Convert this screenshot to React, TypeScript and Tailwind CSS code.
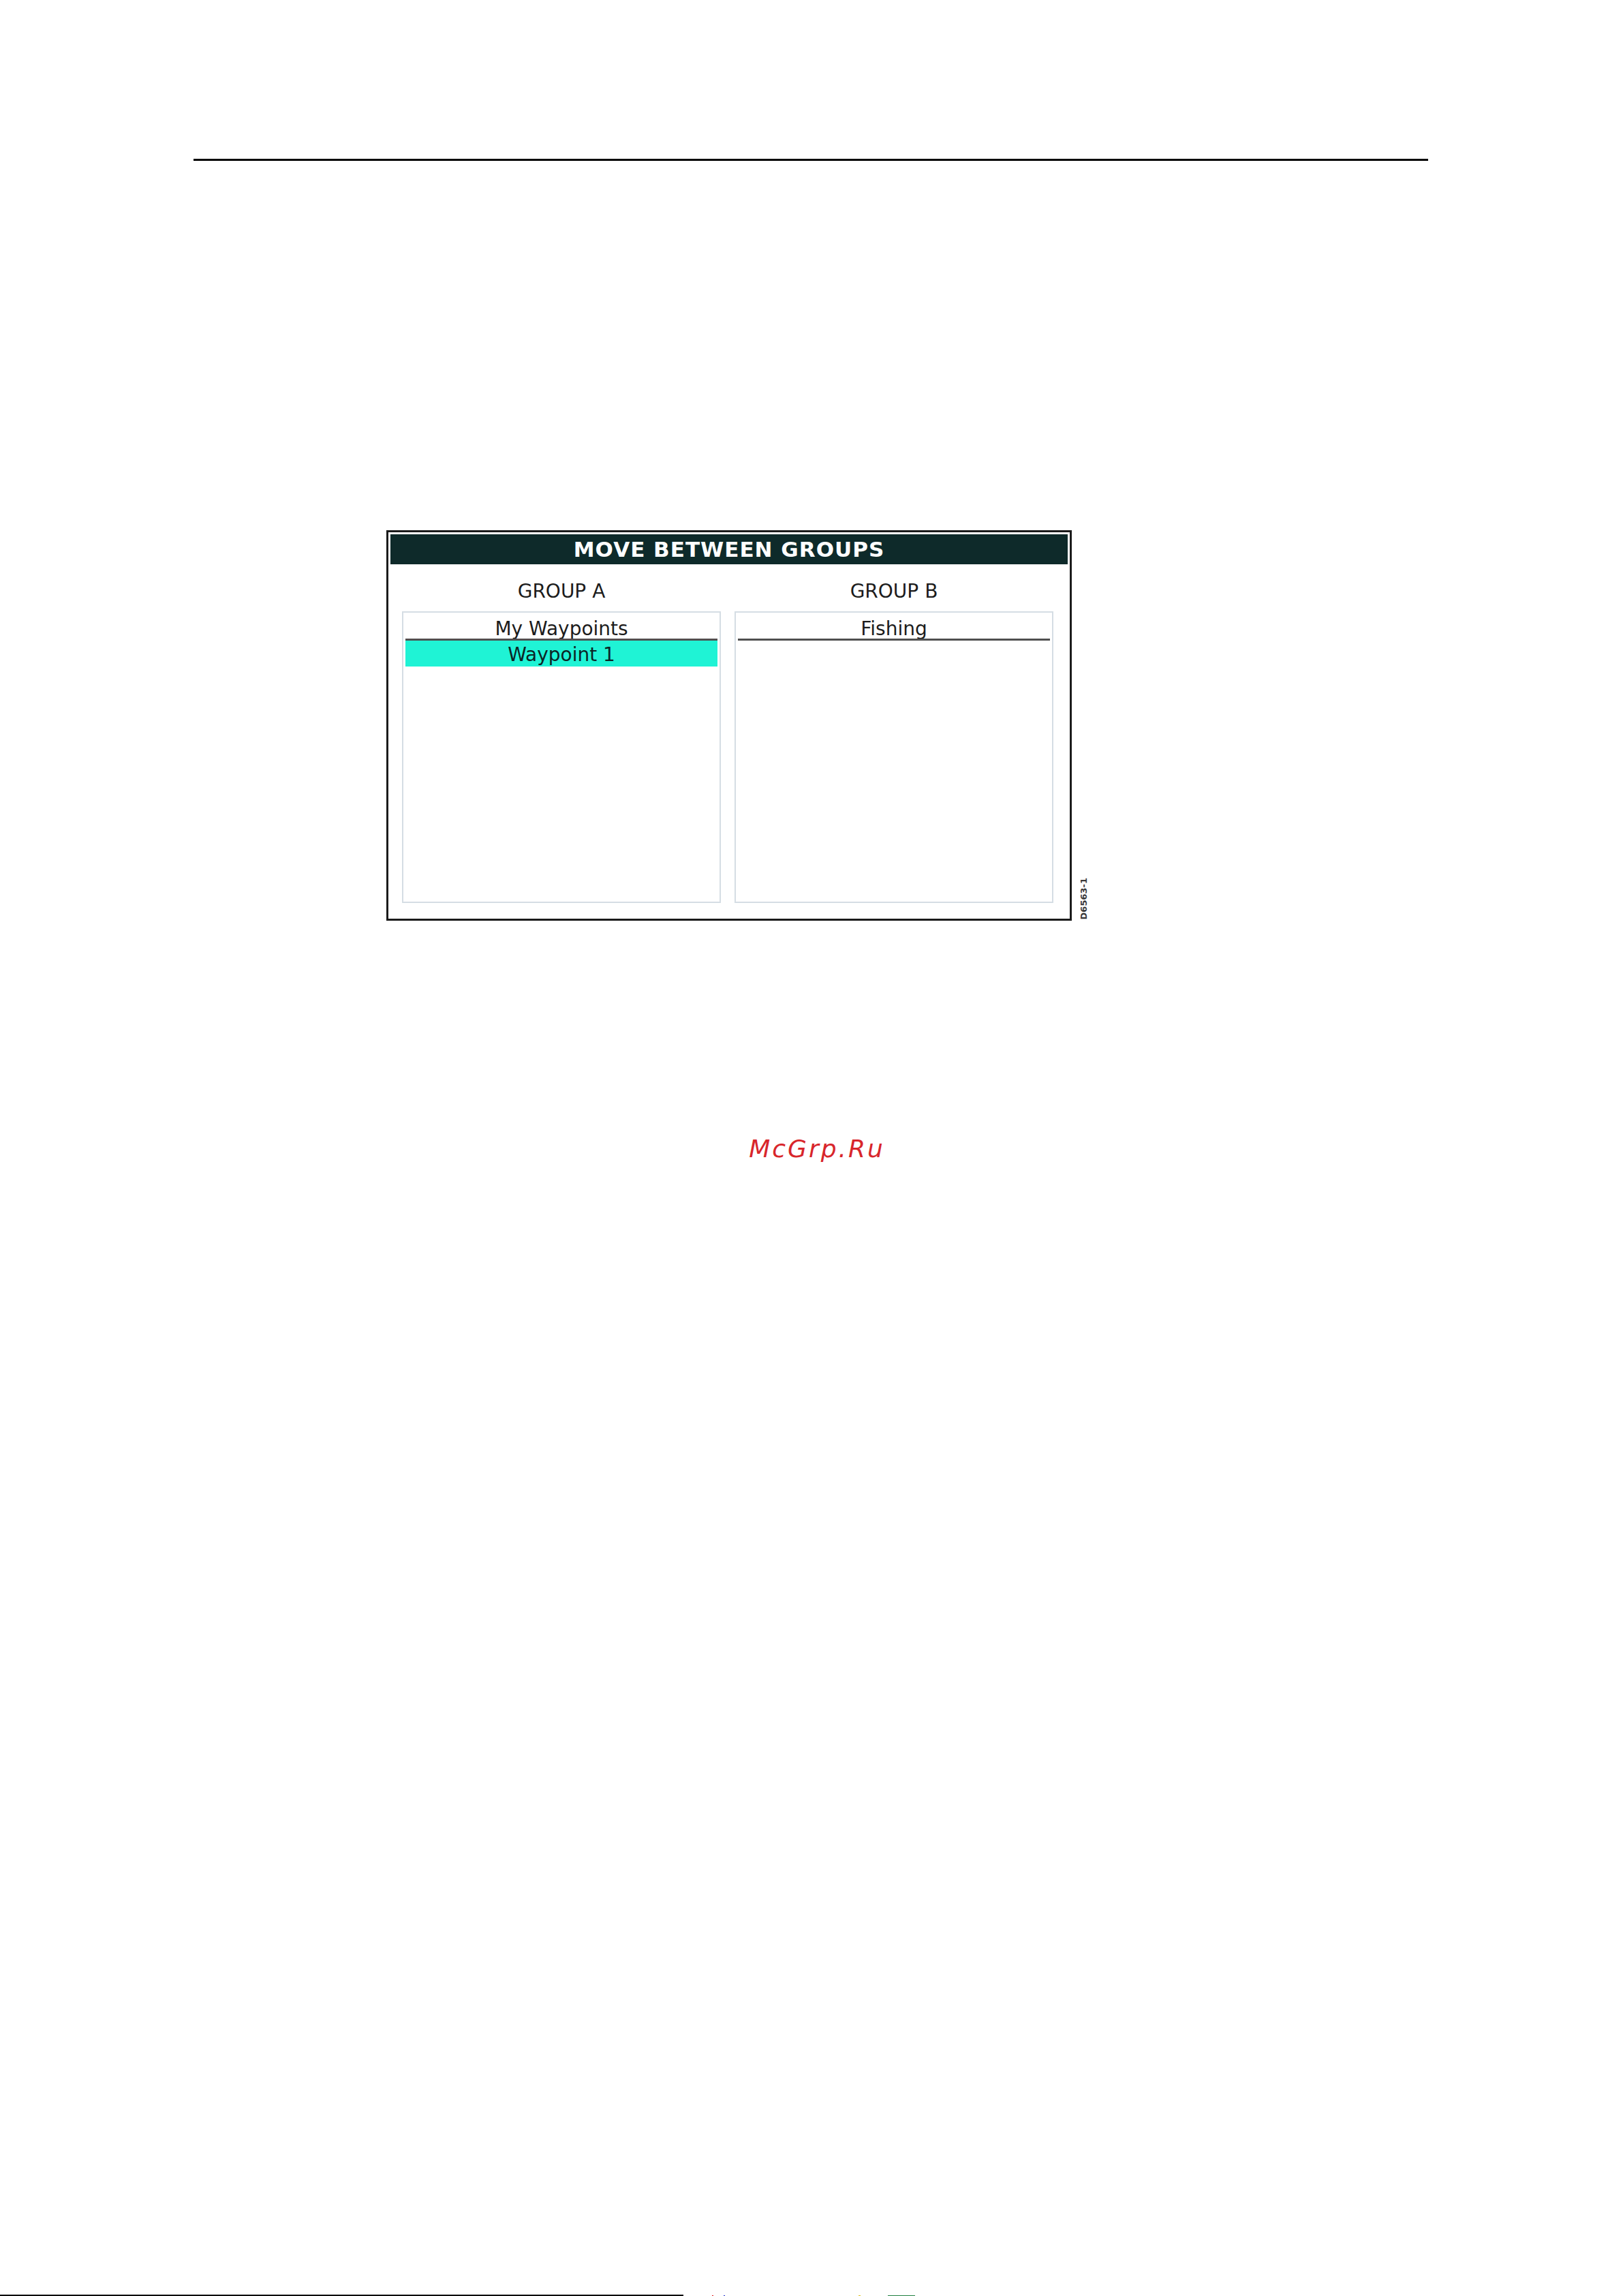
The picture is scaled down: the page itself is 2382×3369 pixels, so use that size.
const ui = { fontFamily: '"DejaVu Sans", Verdana, sans-serif' };

function ListBox({ title, items }: { title: string; items: string[] }) {
  return (
    <div className="flex h-[428px] flex-col border-2 border-[#d5dde4] px-[3px]">
      <div className="flex h-[38px] items-end justify-center">
        <span className="text-[28px] leading-[28px] text-[#1c1c1c]">{title}</span>
      </div>
      <div className="h-[3px] bg-[#505050]" />
      {items.map((it) => (
        <div
          key={it}
          className="h-[38px] bg-[#1ff3d5] pt-[3px] text-center text-[28px] leading-[35px] text-[#0b2626]"
        >
          {it}
        </div>
      ))}
    </div>
  );
}

export default function App() {
  return (
    <div className="flex h-[3369px] w-[2382px] flex-col overflow-hidden bg-white" style={ui}>
      <div className="ml-[284px] mt-[233px] h-[3px] w-[1812px] bg-black" />

      {/* dialog + figure number */}
      <div className="ml-[567px] mt-[542px] flex items-end gap-[10px]">
        <div className="w-[1006px] border-[3px] border-[#1b1b1b] p-[3px]">
          <div className="flex h-[44px] items-center justify-center bg-[#0e2a2a]">
            <span className="text-[31px] font-bold leading-none tracking-[1px] text-white">
              MOVE BETWEEN GROUPS
            </span>
          </div>
          <div className="grid grid-cols-2 gap-x-[20px] pb-[20px] pl-[17px] pr-[21px]">
            <div className="mt-[24px] text-center text-[28px] leading-[32px] text-[#1c1c1c]">GROUP A</div>
            <div className="mt-[24px] text-center text-[28px] leading-[32px] text-[#1c1c1c]">GROUP B</div>
            <div className="mt-[13px]">
              <ListBox title="My Waypoints" items={["Waypoint 1"]} />
            </div>
            <div className="mt-[13px]">
              <ListBox title="Fishing" items={[]} />
            </div>
          </div>
        </div>
        <span className="mb-[2px] rotate-180 text-[13px] font-bold leading-[16px] text-[#3a3a3a] [writing-mode:vertical-rl]">
          D6563-1
        </span>
      </div>

      <div className="mt-[313px] pl-[16px] text-center text-[36px] italic leading-[44px] tracking-[3px] text-[#d8262b]">
        McGrp.Ru
      </div>

      <div className="mt-auto flex h-[2px] items-end">
        <div className="h-[2px] w-[1003px] bg-black" />
        <div className="ml-[42px] h-[1px] w-[2px] bg-[#e02020]" />
        <div className="ml-[15px] h-[1px] w-[2px] bg-[#2030d0]" />
        <div className="ml-[196px] h-[1px] w-[3px] bg-[#e0c020]" />
        <div className="ml-[40px] h-[1px] w-[40px] bg-[#208040]" />
      </div>
    </div>
  );
}
